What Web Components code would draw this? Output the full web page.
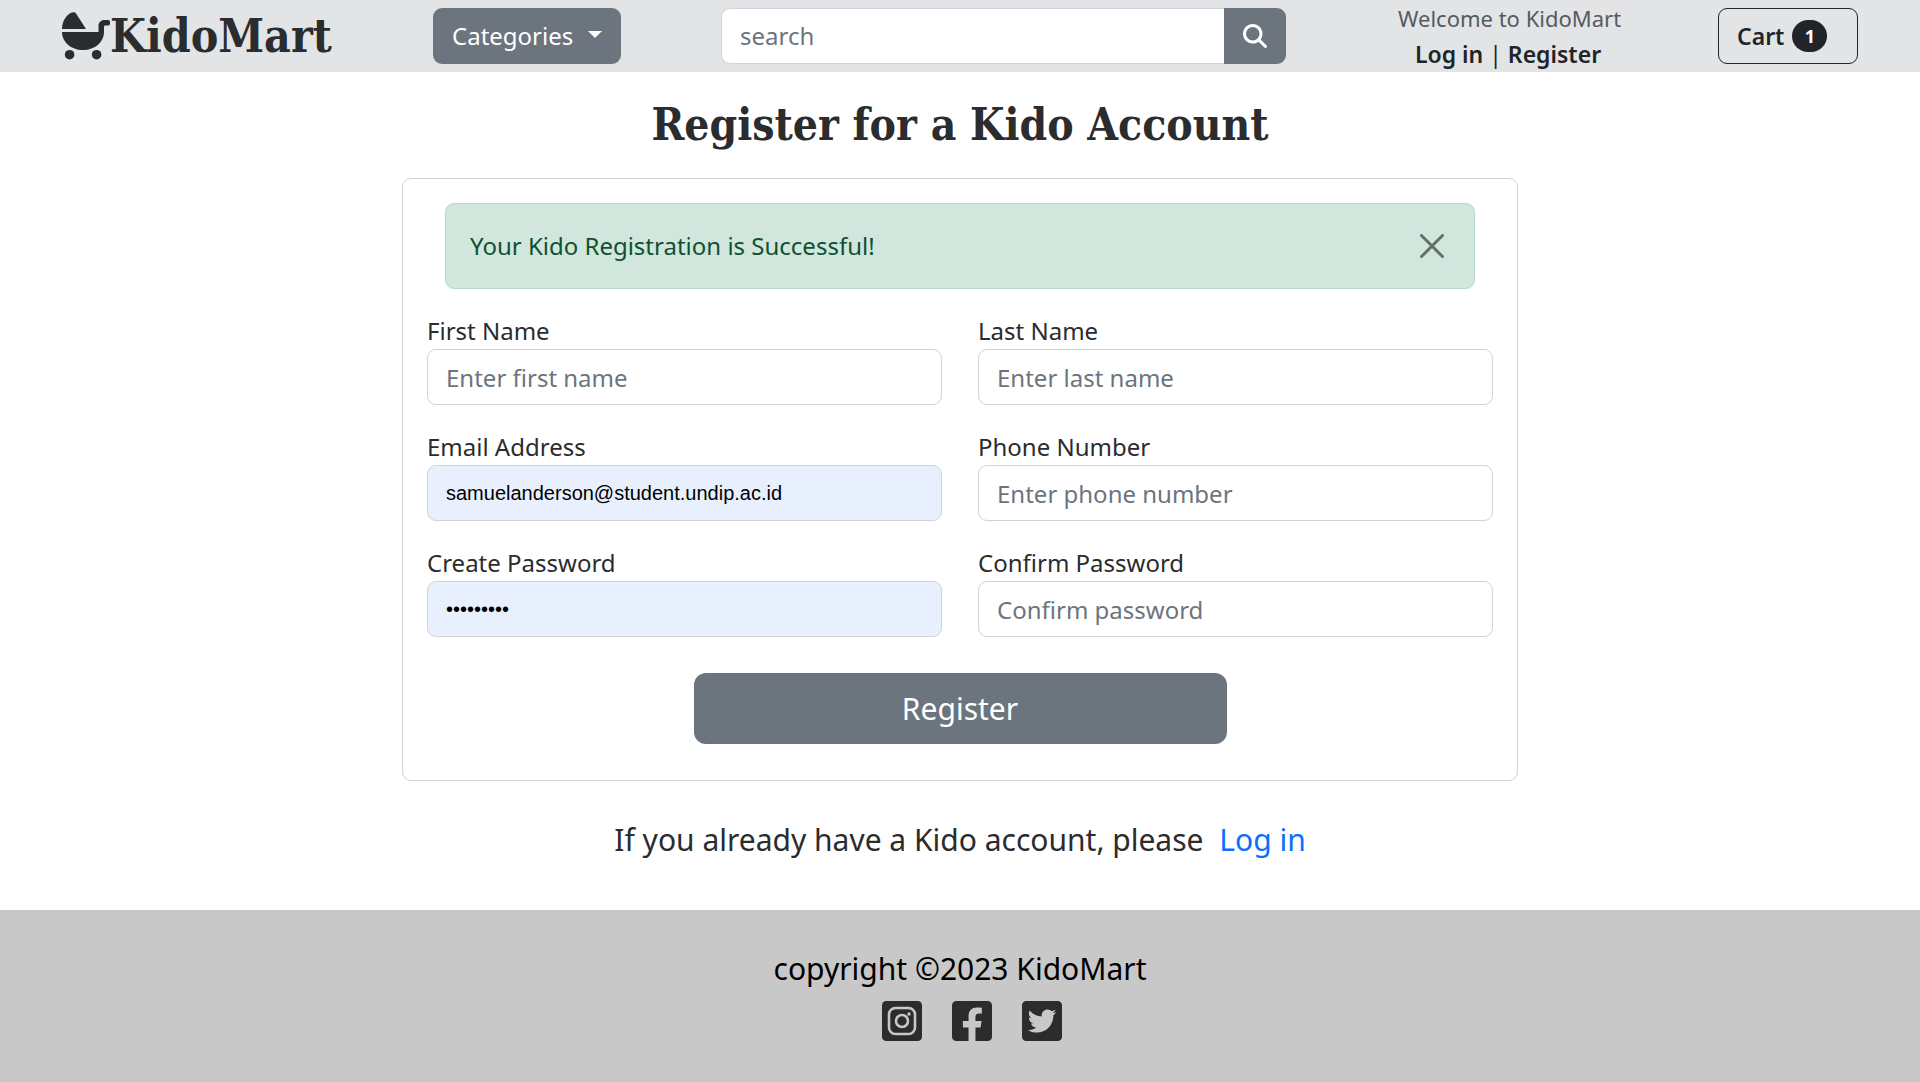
<!DOCTYPE html>
<html lang="en">
<head>
<meta charset="utf-8">
<meta name="viewport" content="width=device-width, initial-scale=1">
<title>KidoMart - Register</title>
<style>
  body {
    margin: 0;
    font: 24px/36px "Noto Sans", "Open Sans", sans-serif;
    color: #2a2c2e;
    background: #fff;
    --slab: "DejaVu Serif Condensed", "DejaVu Serif", serif;
    --grey: #6c757d;
    --line: #ced4da;
    --ink: #212529;
  }
</style>
</head>
<body>
<kido-page></kido-page>

<script>
const define = (name, html, setup) => customElements.define(name, class extends HTMLElement {
  connectedCallback() {
    if (this.shadowRoot) return;
    const root = this.attachShadow({ mode: 'open' });
    const t = document.createElement('template');
    t.innerHTML = '<style>*{box-sizing:border-box}:host{display:block}</style>' + html;
    root.append(t.content.cloneNode(true));
    if (setup) setup(this, root);
  }
});

define('kido-logo', `
<style>
  a { display: flex; align-items: center; color: #2a2c2e; text-decoration: none; font: bold 46px/48px var(--slab); }
  svg { width: 48px; height: 48px; flex: none; }
</style>
<a href="#"><svg viewBox="0 0 48 48" fill="currentColor" aria-hidden="true">
  <path d="M11.6 0.2C13 0.1 13.6 0.8 14.2 1.8L24 17H0C0.2 9.6 3.6 3.6 9 0.8Q10.4 0.2 11.6 0.2Z"/>
  <path d="M0 20H36.5V14C36.5 10.6 39 8 42.4 8H46.3Q48 8 48 9.8V11.8Q48 13.6 46.3 13.6H43.4Q42 13.6 42 15V20C42 30 33 38 21 38S0 30 0 20Z"/>
  <circle cx="7.6" cy="42.7" r="4.8"/><circle cx="34.6" cy="42.7" r="4.8"/>
</svg><span>KidoMart</span></a>`);

define('kido-categories', `
<style>
  button { display: flex; align-items: center; justify-content: space-between; width: 188px; height: 56px; padding: 0 19px; border: 0; border-radius: 9px; background: var(--grey); color: #fff; font: inherit; }
  i { border: 7px solid transparent; border-top-color: #fff; border-bottom: 0; margin-bottom: 4px; }
</style>
<button type="button" aria-haspopup="true">Categories <i></i></button>`);

define('kido-search', `
<style>
  form { display: flex; height: 56px; }
  input { flex: 1; min-width: 0; border: 1px solid var(--line); border-right: 0; border-radius: 9px 0 0 9px; padding: 0 18px; font: inherit; color: var(--ink); background: #fff; }
  input::placeholder { color: var(--grey); opacity: 1; }
  button { width: 62px; border: 0; padding: 0; border-radius: 0 9px 9px 0; background: var(--grey); color: #fff; display: grid; place-items: center; }
  svg { width: 24px; height: 24px; }
</style>
<form role="search"><input type="search" placeholder="search" aria-label="search"><button type="button" aria-label="Submit search">
<svg viewBox="0 0 512 512" fill="currentColor"><path d="M416 208c0 45.900-14.900 88.300-40 122.700L502.600 457.400c12.500 12.500 12.500 32.800 0 45.300s-32.800 12.500-45.300 0L330.700 376c-34.400 25.200-76.800 40-122.700 40C93.100 416 0 322.900 0 208S93.100 0 208 0S416 93.100 416 208zM208 352a144 144 0 1 0 0-288 144 144 0 1 0 0 288z"/></svg></button></form>`);

define('kido-account', `
<style>
  :host { text-align: center; white-space: nowrap; }
  .hi { font-size: 22px; line-height: 36px; color: #555b60; }
  .links { color: var(--ink); font-size: 23px; }
  a { color: inherit; text-decoration: none; font-weight: 600; }
</style>
<div class="hi">Welcome to KidoMart</div>
<div class="links"><a href="#login">Log in</a> | <a href="#register">Register</a></div>`);

define('kido-cart', `
<style>
  button { display: flex; align-items: center; gap: 8px; width: 140px; height: 56px; padding: 0 18px; border: 1px solid var(--ink); border-radius: 9px; background: transparent; color: var(--ink); font: inherit; font-size: 23px; font-weight: 600; }
  span { width: 35px; border-radius: 16px; background: var(--ink); color: #fff; font-size: 18px; font-weight: 700; line-height: 32px; text-align: center; }
</style>
<button type="button">Cart <span>1</span></button>`);

define('kido-navbar', `
<style>
  :host { background: #e2e4e5; }
  nav { display: flex; align-items: center; gap: 100px; padding: 0 62px; height: 72px; }
  kido-logo { width: 271px; }
  kido-search { flex: 1; min-width: 200px; }
  kido-account { width: 232px; padding-left: 12px; }
</style>
<nav><kido-logo></kido-logo><kido-categories></kido-categories><kido-search></kido-search><kido-account></kido-account><kido-cart></kido-cart></nav>`);

define('kido-alert', `
<style>
  :host { display: flex; align-items: center; justify-content: space-between; padding: 24px; border: 1px solid #badbcc; border-radius: 9px; background: #d1e7dd; color: #0f5132; }
  button { border: 0; padding: 6px; background: none; color: #62706a; display: grid; margin: 0; }
  svg { width: 24px; height: 24px; display: block; }
</style>
<slot></slot><button type="button" aria-label="Close"><svg viewBox="0 0 24 24" fill="none" stroke="currentColor" stroke-width="3" stroke-linecap="round"><path d="M1.500 1.500l21 21m0-21l-21 21"/></svg></button>`);

define('kido-field', `
<style>
  label { display: block; }
  input { display: block; width: 100%; height: 56px; padding: 0 18px; border: 1px solid var(--line); border-radius: 9px; background: #fff; font: inherit; color: var(--ink); }
  input::placeholder { color: var(--grey); opacity: 1; }
  input.filled { background: #e8f0fe; color: #000; font: 20px "Liberation Sans", Arial, sans-serif; }
</style>
<label for="box"></label><input id="box">`, (host, root) => {
  root.querySelector('label').textContent = host.getAttribute('label');
  const box = root.querySelector('input');
  box.type = host.getAttribute('type') || 'text';
  box.placeholder = host.getAttribute('placeholder') || '';
  if (host.hasAttribute('value')) { box.value = host.getAttribute('value'); box.className = 'filled'; }
});

define('kido-register-form', `
<style>
  :host { border: 1px solid var(--line); border-radius: 9px; padding: 24px 24px 36px; }
  kido-alert { margin: 0 18px 24px; }
  .grid { display: grid; grid-template-columns: 1fr 1fr; gap: 24px 36px; }
  .submit { display: block; width: 50%; height: 71px; margin: 36px auto 0; border: 0; border-radius: 12px; background: var(--grey); color: #fff; font: inherit; font-size: 30px; }
</style>
<form>
  <kido-alert>Your Kido Registration is Successful!</kido-alert>
  <div class="grid">
    <kido-field label="First Name" placeholder="Enter first name"></kido-field>
    <kido-field label="Last Name" placeholder="Enter last name"></kido-field>
    <kido-field label="Email Address" type="email" value="samuelanderson@student.undip.ac.id"></kido-field>
    <kido-field label="Phone Number" type="tel" placeholder="Enter phone number"></kido-field>
    <kido-field label="Create Password" type="password" value="kidomart1"></kido-field>
    <kido-field label="Confirm Password" type="password" placeholder="Confirm password"></kido-field>
  </div>
  <button class="submit" type="button">Register</button>
</form>`);

define('kido-footer', `
<style>
  :host { background: #c8c8c8; color: #000; text-align: center; padding: 36px 0; }
  p { margin: 0; font-size: 30px; line-height: 45px; }
  div { display: flex; justify-content: center; gap: 30px; padding: 10px 0 0 24px; }
  a { color: #2a2c2e; }
  svg { display: block; width: 40px; height: 40px; }
</style>
<p>copyright ©2023 KidoMart</p>
<div>
<a href="#" aria-label="Instagram"><svg viewBox="0 0 40 40"><rect width="40" height="40" rx="4.300" fill="currentColor"/><g fill="none" stroke="#c8c8c8" stroke-width="2.600"><rect x="7" y="7" width="26" height="26" rx="6.500"/><circle cx="20" cy="20" r="6"/></g><circle cx="27" cy="13" r="1.700" fill="#c8c8c8"/></svg></a>
<a href="#" aria-label="Facebook"><svg viewBox="0 32 448 448" fill="currentColor"><path d="M400 32H48A48 48 0 0 0 0 80v352a48 48 0 0 0 48 48h137.250V327.690h-63V256h63v-54.640c0-62.150 37-96.480 93.670-96.480 27.140 0 55.520 4.840 55.520 4.840v61h-31.270c-30.810 0-40.420 19.120-40.420 38.730V256h68.780l-11 71.690h-57.780V480H400a48 48 0 0 0 48-48V80a48 48 0 0 0-48-48z"/></svg></a>
<a href="#" aria-label="Twitter"><svg viewBox="0 32 448 448" fill="currentColor"><path d="M400 32H48C21.500 32 0 53.500 0 80v352c0 26.500 21.500 48 48 48h352c26.500 0 48-21.500 48-48V80c0-26.500-21.500-48-48-48zm-48.900 158.800c.2 2.800.2 5.700.2 8.500 0 86.700-66 186.600-186.600 186.600-37.200 0-71.700-10.800-100.700-29.400 5.300.6 10.400.8 15.800.8 30.700 0 58.900-10.400 81.400-28-28.800-.6-53-19.500-61.300-45.500 10.100 1.500 19.200 1.500 29.600-1.200-30-6.100-52.500-32.500-52.500-64.400v-.8c8.700 4.900 18.900 7.900 29.600 8.300a65.447 65.447 0 0 1-29.200-54.600c0-12.200 3.200-23.400 8.900-33.100 32.300 39.800 80.800 65.800 135.200 68.600-9.300-44.500 24-80.600 64-80.600 18.900 0 35.900 7.900 47.900 20.700 14.800-2.800 29-8.300 41.600-15.800-4.900 15.200-15.200 28-28.800 36.100 13.200-1.400 26-5.100 37.800-10.200-8.900 13.100-20.100 24.700-32.900 34z"/></svg></a>
</div>`);

define('kido-page', `
<style>
  :host { display: flex; flex-direction: column; min-height: 100vh; }
  main { padding: 24px 24px 48px; }
  h1 { margin: 0 0 24px; font: bold 44px/58px var(--slab); text-align: center; }
  kido-register-form { max-width: 1116px; margin: 0 auto; }
  p { margin: 36px 0 0; font-size: 30px; line-height: 45px; text-align: center; }
  a { color: #0d6efd; text-decoration: none; margin-left: 8px; }
  kido-footer { flex: 1; }
</style>
<kido-navbar></kido-navbar>
<main>
  <h1>Register for a Kido Account</h1>
  <kido-register-form></kido-register-form>
  <p>If you already have a Kido account, please <a href="#login">Log in</a></p>
</main>
<kido-footer></kido-footer>`);
</script>
</body>
</html>
